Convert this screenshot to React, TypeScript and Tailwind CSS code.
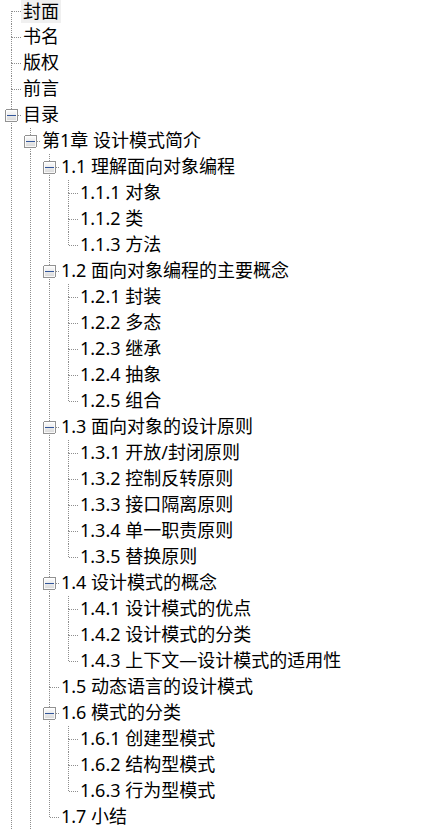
import React from 'react';

type N = { t: string; c?: N[]; more?: boolean };

const tree: N[] = [
  { t: '封面' },
  { t: '书名' },
  { t: '版权' },
  { t: '前言' },
  {
    t: '目录',
    more: true,
    c: [
      {
        t: '第1章 设计模式简介',
        more: true,
        c: [
          { t: '1.1 理解面向对象编程', c: [{ t: '1.1.1 对象' }, { t: '1.1.2 类' }, { t: '1.1.3 方法' }] },
          {
            t: '1.2 面向对象编程的主要概念',
            c: [{ t: '1.2.1 封装' }, { t: '1.2.2 多态' }, { t: '1.2.3 继承' }, { t: '1.2.4 抽象' }, { t: '1.2.5 组合' }],
          },
          {
            t: '1.3 面向对象的设计原则',
            c: [
              { t: '1.3.1 开放/封闭原则' },
              { t: '1.3.2 控制反转原则' },
              { t: '1.3.3 接口隔离原则' },
              { t: '1.3.4 单一职责原则' },
              { t: '1.3.5 替换原则' },
            ],
          },
          {
            t: '1.4 设计模式的概念',
            c: [{ t: '1.4.1 设计模式的优点' }, { t: '1.4.2 设计模式的分类' }, { t: '1.4.3 上下文—设计模式的适用性' }],
          },
          { t: '1.5 动态语言的设计模式' },
          { t: '1.6 模式的分类', c: [{ t: '1.6.1 创建型模式' }, { t: '1.6.2 结构型模式' }, { t: '1.6.3 行为型模式' }] },
          { t: '1.7 小结' },
        ],
      },
    ],
  },
];

type Row = { t: string; guides: boolean[]; hasNext: boolean; first: boolean; hasChildren: boolean; selected: boolean };

function flatten(nodes: N[], guides: boolean[], out: Row[]) {
  nodes.forEach((n, i) => {
    const hasNext = i < nodes.length - 1 || !!n.more;
    const first = guides.length === 0 && i === 0;
    out.push({ t: n.t, guides, hasNext, first, hasChildren: !!n.c, selected: first });
    if (n.c) flatten(n.c, [...guides, hasNext], out);
  });
  return out;
}

const rows = flatten(tree, [], []);

const LINE = '#8e8e8e';

function Guide({ h, on }: { h: number; on: boolean }) {
  return (
    <svg width={19} height={h} className="shrink-0 block" shapeRendering="crispEdges">
      {on && <line x1={9.5} y1={0} x2={9.5} y2={h} stroke={LINE} strokeDasharray="1 1" />}
    </svg>
  );
}

function Connector({ h, cy, up, down, box }: { h: number; cy: number; up: boolean; down: boolean; box: boolean }) {
  return (
    <svg width={19} height={h} className="shrink-0 block" shapeRendering="crispEdges">
      <defs>
        <linearGradient id="tvbox" x1="0" y1="0" x2="0" y2="1">
          <stop offset="0" stopColor="#ffffff" />
          <stop offset="1" stopColor="#d6d6d6" />
        </linearGradient>
      </defs>
      {up && <line x1={9.5} y1={0} x2={9.5} y2={cy} stroke={LINE} strokeDasharray="1 1" />}
      {down && <line x1={9.5} y1={cy} x2={9.5} y2={h} stroke={LINE} strokeDasharray="1 1" />}
      <line x1={10} y1={cy + 0.5} x2={19} y2={cy + 0.5} stroke={LINE} strokeDasharray="1 1" />
      {box && (
        <g>
          <rect x={3.5} y={cy - 5.5} width={12} height={12} rx={1.5} fill="url(#tvbox)" stroke="#929292" />
          <rect x={4.5} y={cy - 4.5} width={10} height={10} fill="none" stroke="#ffffff" strokeOpacity={0.8} />
          <line x1={5} y1={cy + 0.5} x2={14} y2={cy + 0.5} stroke="#33569a" />
        </g>
      )}
    </svg>
  );
}

export default function App() {
  return (
    <div className="h-[830px] w-[447px] overflow-hidden bg-white">
      <div className="flex flex-col pl-[2px] font-['Noto_Sans','Noto_Sans_CJK_SC',sans-serif] text-[18px] text-black">
        {rows.map((r, idx) => {
          const h = r.first ? 24 : 26;
          const cy = r.first ? 11 : 13;
          return (
            <div key={idx} className={'flex ' + (r.first ? 'h-[24px]' : 'h-[26px]')}>
              {r.guides.map((g, i) => (
                <Guide key={i} h={h} on={g} />
              ))}
              <Connector h={h} cy={cy} up={!r.first} down={r.hasNext} box={r.hasChildren} />
              <span
                className={
                  'self-start px-[2px] whitespace-nowrap ' +
                  (r.first ? 'h-[23px] leading-[22px] bg-[#f0f0f0]' : 'h-[25px] leading-[25px]')
                }
              >
                {r.t}
              </span>
            </div>
          );
        })}
      </div>
    </div>
  );
}
